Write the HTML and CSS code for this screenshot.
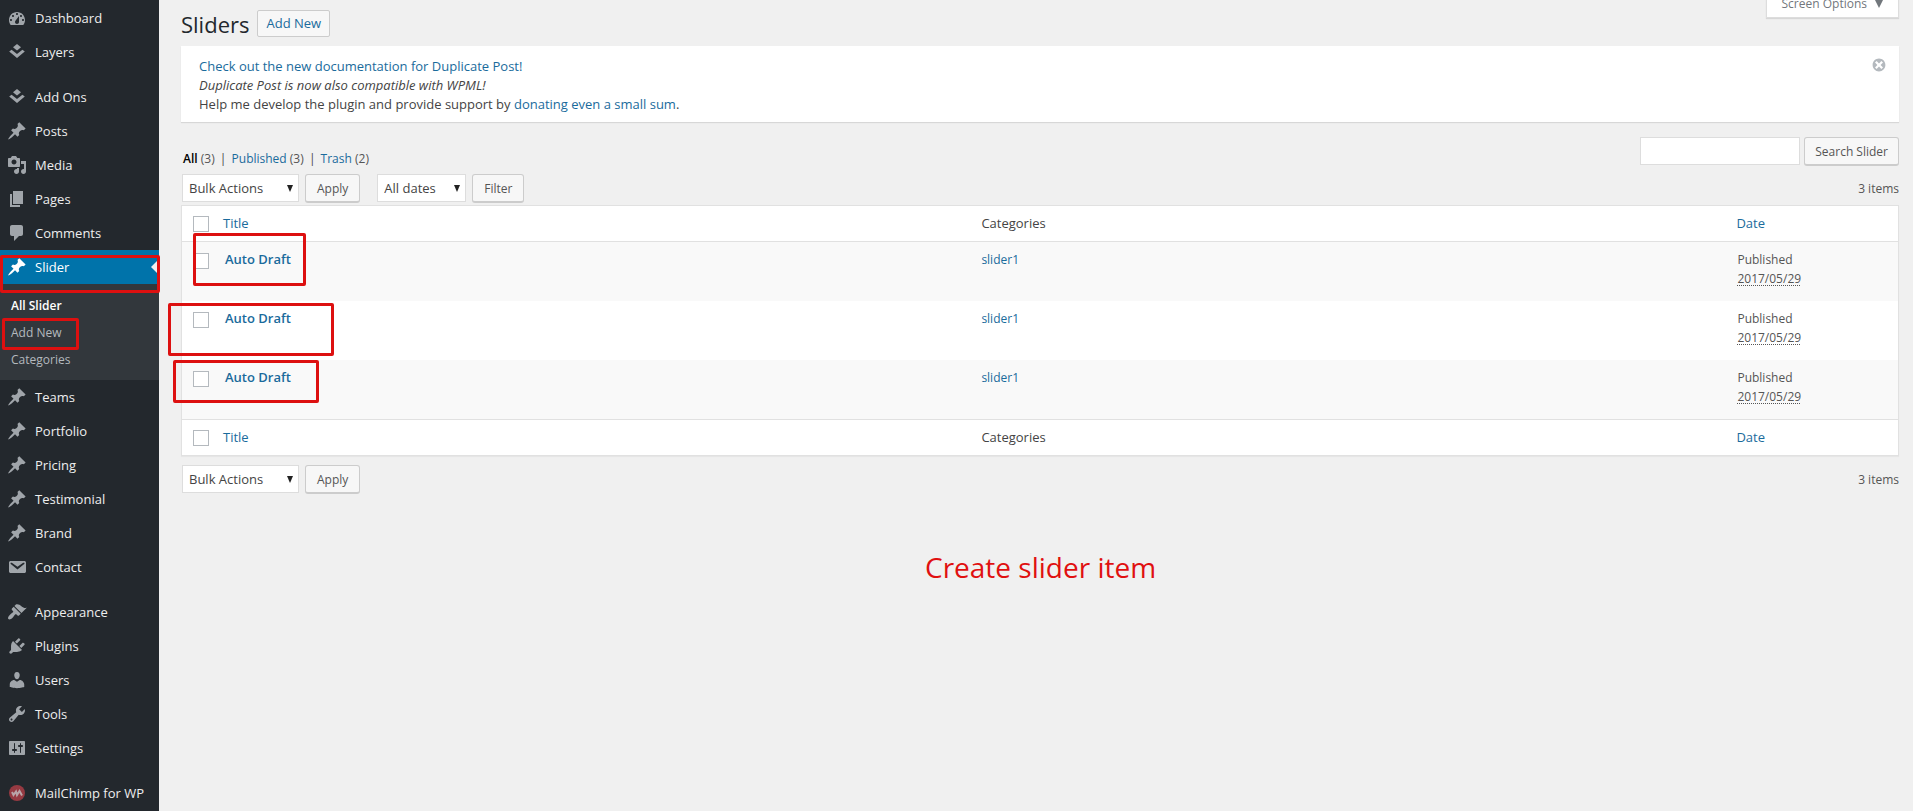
FILE: index.html
```html
<!DOCTYPE html>
<html lang="en">
<head>
<meta charset="utf-8">
<title>Sliders</title>
<link rel="stylesheet" href="styles.css">
</head>
<body>
<svg class="sprite" aria-hidden="true">
  <symbol id="i-dashboard" viewBox="0 0 20 20"><path fill-rule="evenodd" d="M3.760 17h12.480c1.100-1.370 1.760-3.110 1.760-5 0-4.420-3.580-8-8-8s-8 3.580-8 8c0 1.890.66 3.630 1.760 5zM10 5c.55 0 1 .45 1 1s-.45 1-1 1-1-.45-1-1 .45-1 1-1zM6 7c.55 0 1 .45 1 1s-.45 1-1 1-1-.45-1-1 .45-1 1-1zm8 0c.55 0 1 .45 1 1s-.45 1-1 1-1-.45-1-1 .45-1 1-1zm-5.370 5.550L12 8v6c0 1.100-.9 2-2 2s-2-.9-2-2c0-.57.24-1.080.63-1.450zM4 11c.55 0 1 .45 1 1s-.45 1-1 1-1-.45-1-1 .45-1 1-1zm12 0c.55 0 1 .45 1 1s-.45 1-1 1-1-.45-1-1 .45-1 1-1z"/></symbol>
  <symbol id="i-layers" viewBox="0 0 20 20"><path d="M10 2l4 3.200-4 3.200-4-3.200z"/><path d="M2.200 9.600L4.600 7.700 10 12l5.400-4.300 2.400 1.900L10 16z"/></symbol>
  <symbol id="i-pin" viewBox="0 0 20 20"><path d="M10.440 3.020l1.820-1.820 6.360 6.350-1.830 1.820c-1.050-.68-2.480-.57-3.410.36l-.75.75c-.92.93-1.040 2.350-.35 3.410l-1.830 1.820-2.410-2.410-2.800 2.790c-.42.42-3.380 2.710-3.800 2.290s1.860-3.390 2.280-3.810l2.790-2.790L4.100 9.360l1.830-1.820c1.050.69 2.480.57 3.400-.36l.75-.75c.93-.92 1.050-2.350.36-3.410z"/></symbol>
  <symbol id="i-media" viewBox="0 0 20 20"><path fill-rule="evenodd" d="M13 11V4c0-.55-.45-1-1-1h-1.670L9 1H5L3.670 3H2c-.55 0-1 .45-1 1v7c0 .55.45 1 1 1h10c.55 0 1-.45 1-1zM7 4.500c1.380 0 2.500 1.120 2.500 2.500S8.380 9.500 7 9.500 4.500 8.380 4.500 7 5.620 4.500 7 4.500zM14 6h5v10.500c0 1.380-1.120 2.500-2.500 2.500S14 17.880 14 16.500s1.120-2.500 2.500-2.500c.17 0 .34.02.5.05V9h-3V6zm-4 8.050V13h2v3.500c0 1.380-1.120 2.500-2.500 2.500S7 17.880 7 16.500 8.120 14 9.500 14c.17 0 .34.02.5.05z"/></symbol>
  <symbol id="i-page" viewBox="0 0 20 20"><path d="M6 15V2h10v13H6zm-1 1h8v2H3V5h2v11z"/></symbol>
  <symbol id="i-comment" viewBox="0 0 20 20"><path d="M5 2h9c1.100 0 2 .9 2 2v7c0 1.100-.9 2-2 2h-2l-5 5v-5H5c-1.100 0-2-.9-2-2V4c0-1.100.9-2 2-2z"/></symbol>
  <symbol id="i-mail" viewBox="0 0 20 20"><path fill-rule="evenodd" d="M3.870 4h13.250C18.370 4 19 4.590 19 5.790v8.420c0 1.190-.63 1.790-1.880 1.790H3.870c-1.250 0-1.880-.6-1.880-1.790V5.790c0-1.200.63-1.790 1.880-1.790zm6.620 8.600l6.740-5.530c.24-.2.43-.66.13-1.070-.29-.41-.82-.42-1.170-.17l-5.700 3.860L4.800 5.830c-.35-.25-.88-.24-1.170.17-.3.41-.11.87.13 1.070z"/></symbol>
  <symbol id="i-brush" viewBox="0 0 20 20"><path d="M14.480 11.060L7.410 3.990l1.500-1.500c.5-.56 2.300-.47 3.510.32 1.210.8 1.430 1.280 2.910 2.100 1.180.64 2.450 1.260 4.450.85zm-.71.71L6.700 4.700 4.930 6.470c-.39.39-.39 1.020 0 1.410l1.060 1.060c.39.39.39 1.030 0 1.420-.6.6-1.430 1.110-2.210 1.690-.35.26-.7.53-1.010.84C1.430 14.230.4 16.080 1.400 17.070c.99 1 2.840-.03 4.180-1.360.31-.31.58-.66.85-1.020.57-.78 1.080-1.610 1.690-2.210.39-.39 1.020-.39 1.410 0l1.060 1.060c.39.39 1.020.39 1.410 0z"/></symbol>
  <symbol id="i-plug" viewBox="0 0 20 20"><path d="M13.110 4.360L9.870 7.600 8 5.730l3.240-3.240c.35-.34 1.050-.2 1.560.32.52.51.66 1.210.31 1.550zm-8 1.770l.91-1.120 9.010 9.010-1.190.84c-.71.71-2.630 1.160-3.820 1.160H6.140L4.900 17.260c-.59.59-1.540.59-2.120 0-.59-.58-.59-1.530 0-2.120l1.240-1.240v-3.880c0-1.130.4-3.190 1.090-3.890zm7.260 3.970l3.240-3.240c.34-.35 1.040-.21 1.550.31.52.51.66 1.210.31 1.550l-3.240 3.250z"/></symbol>
  <symbol id="i-user" viewBox="0 0 20 20"><path d="M10 9.250c-2.270 0-2.730-3.440-2.730-3.440C7 4.020 7.820 2 9.970 2c2.160 0 2.980 2.020 2.710 3.810 0 0-.41 3.440-2.680 3.440zm0 2.570L12.720 10c2.390 0 4.520 2.330 4.520 4.530v2.490s-3.650 1.130-7.240 1.130c-3.650 0-7.240-1.130-7.240-1.130v-2.490c0-2.250 1.940-4.480 4.470-4.480z"/></symbol>
  <symbol id="i-wrench" viewBox="0 0 20 20"><path fill-rule="evenodd" d="M16.680 9.770c-1.340 1.340-3.300 1.670-4.950.99l-5.410 6.520c-.99.99-2.590.99-3.580 0s-.99-2.590 0-3.570l6.520-5.420c-.68-1.650-.35-3.610.99-4.950 1.280-1.280 3.120-1.620 4.720-1.060l-2.890 2.890 2.820 2.820 2.860-2.870c.53 1.580.18 3.390-1.080 4.650zM3.810 16.210c.4.39 1.040.39 1.430 0 .4-.4.4-1.040 0-1.430-.39-.4-1.030-.4-1.430 0-.39.39-.39 1.030 0 1.430z"/></symbol>
  <symbol id="i-sliders" viewBox="0 0 20 20"><path fill-rule="evenodd" d="M18 16V4c0-.55-.45-1-1-1H3c-.55 0-1 .45-1 1v12c0 .55.45 1 1 1h14c.55 0 1-.45 1-1zM8 11h1c.55 0 1 .45 1 1s-.45 1-1 1H8v1.500c0 .28-.22.5-.5.5s-.5-.22-.5-.5V13H6c-.55 0-1-.45-1-1s.45-1 1-1h1V5.500c0-.28.22-.5.5-.5s.5.22.5.5V11zm5-2h-1c-.55 0-1-.45-1-1s.45-1 1-1h1V5.500c0-.28.22-.5.5-.5s.5.22.5.5V7h1c.55 0 1 .45 1 1s-.45 1-1 1h-1v5.500c0 .28-.22.5-.5.5s-.5-.22-.5-.5V9z"/></symbol>
  <symbol id="i-chimp" viewBox="0 0 20 20"><circle cx="10" cy="10" r="8" fill="#963a42"/><path d="M5 9l1.500 3L9 8.500l1 3.500 2.500-4 2.500 4.500" fill="none" stroke="#b9a4a8" stroke-width="2"/></symbol>
  <symbol id="i-dismiss" viewBox="0 0 20 20"><path fill-rule="evenodd" d="M10 2c4.420 0 8 3.580 8 8s-3.580 8-8 8-8-3.580-8-8 3.580-8 8-8zm5 11l-3-3 3-3-2-2-3 3-3-3-2 2 3 3-3 3 2 2 3-3 3 3z"/></symbol>
</svg>

<div class="layout">
  <nav class="menu" aria-label="Main menu">
    <a class="menu-item" href="#"><svg class="icon"><use href="#i-dashboard"/></svg>Dashboard</a>
    <a class="menu-item" href="#"><svg class="icon"><use href="#i-layers"/></svg>Layers</a>
    <a class="menu-item spaced" href="#"><svg class="icon"><use href="#i-layers"/></svg>Add Ons</a>
    <a class="menu-item" href="#"><svg class="icon"><use href="#i-pin"/></svg>Posts</a>
    <a class="menu-item" href="#"><svg class="icon"><use href="#i-media"/></svg>Media</a>
    <a class="menu-item" href="#"><svg class="icon"><use href="#i-page"/></svg>Pages</a>
    <a class="menu-item" href="#"><svg class="icon"><use href="#i-comment"/></svg>Comments</a>
    <a class="menu-item current" href="#"><svg class="icon"><use href="#i-pin"/></svg>Slider</a>
    <div class="submenu">
      <a class="submenu-item active" href="#">All Slider</a>
      <a class="submenu-item" href="#">Add New</a>
      <a class="submenu-item" href="#">Categories</a>
    </div>
    <a class="menu-item" href="#"><svg class="icon"><use href="#i-pin"/></svg>Teams</a>
    <a class="menu-item" href="#"><svg class="icon"><use href="#i-pin"/></svg>Portfolio</a>
    <a class="menu-item" href="#"><svg class="icon"><use href="#i-pin"/></svg>Pricing</a>
    <a class="menu-item" href="#"><svg class="icon"><use href="#i-pin"/></svg>Testimonial</a>
    <a class="menu-item" href="#"><svg class="icon"><use href="#i-pin"/></svg>Brand</a>
    <a class="menu-item" href="#"><svg class="icon"><use href="#i-mail"/></svg>Contact</a>
    <a class="menu-item spaced" href="#"><svg class="icon"><use href="#i-brush"/></svg>Appearance</a>
    <a class="menu-item" href="#"><svg class="icon"><use href="#i-plug"/></svg>Plugins</a>
    <a class="menu-item" href="#"><svg class="icon"><use href="#i-user"/></svg>Users</a>
    <a class="menu-item" href="#"><svg class="icon"><use href="#i-wrench"/></svg>Tools</a>
    <a class="menu-item" href="#"><svg class="icon"><use href="#i-sliders"/></svg>Settings</a>
    <a class="menu-item spaced" href="#"><svg class="icon"><use href="#i-chimp"/></svg>MailChimp for WP</a>
  </nav>

  <main class="content">
    <header class="page-head">
      <h1 class="page-title">Sliders</h1>
      <a class="title-action" href="#">Add New</a>
      <button class="screen-options" type="button">Screen Options</button>
    </header>

    <section class="notice">
      <p class="notice-text">
        <a href="#">Check out the new documentation for Duplicate Post!</a><br>
        <em>Duplicate Post is now also compatible with WPML!</em><br>
        Help me develop the plugin and provide support by <a href="#">donating even a small sum</a>.
      </p>
      <button class="dismiss" type="button" aria-label="Dismiss"><svg class="dismiss-icon"><use href="#i-dismiss"/></svg></button>
    </section>

    <div class="views-row">
      <div class="views">
        <a class="view-current" href="#">All</a> <span class="count">(3)</span> <span class="bar">|</span>
        <a href="#">Published</a> <span class="count">(3)</span> <span class="bar">|</span>
        <a href="#">Trash</a> <span class="count">(2)</span>
      </div>
      <form class="search">
        <input class="search-input" type="search" aria-label="Search Slider">
        <button class="button" type="button">Search Slider</button>
      </form>
    </div>

    <div class="tablenav">
      <span class="select-wrap bulk"><select class="select" aria-label="Bulk action"><option>Bulk Actions</option></select></span>
      <button class="button" type="button">Apply</button>
      <span class="select-wrap dates"><select class="select" aria-label="Filter by date"><option>All dates</option></select></span>
      <button class="button" type="button">Filter</button>
      <span class="item-count">3 items</span>
    </div>

    <table class="list">
      <thead>
        <tr><td class="col-check"><input class="check" type="checkbox" aria-label="Select all"></td><th class="col-title"><a href="#">Title</a></th><th class="col-cats">Categories</th><th class="col-date"><a href="#">Date</a></th></tr>
      </thead>
      <tbody>
        <tr><td class="col-check"><input class="check" type="checkbox" aria-label="Select Auto Draft"></td><td><a class="row-title" href="#">Auto Draft</a></td><td class="cat"><a href="#">slider1</a></td><td class="date">Published<br><abbr>2017/05/29</abbr></td></tr>
        <tr><td class="col-check"><input class="check" type="checkbox" aria-label="Select Auto Draft"></td><td><a class="row-title" href="#">Auto Draft</a></td><td class="cat"><a href="#">slider1</a></td><td class="date">Published<br><abbr>2017/05/29</abbr></td></tr>
        <tr><td class="col-check"><input class="check" type="checkbox" aria-label="Select Auto Draft"></td><td><a class="row-title" href="#">Auto Draft</a></td><td class="cat"><a href="#">slider1</a></td><td class="date">Published<br><abbr>2017/05/29</abbr></td></tr>
      </tbody>
      <tfoot>
        <tr><td class="col-check"><input class="check" type="checkbox" aria-label="Select all"></td><th><a href="#">Title</a></th><th>Categories</th><th><a href="#">Date</a></th></tr>
      </tfoot>
    </table>

    <div class="tablenav bottom">
      <span class="select-wrap bulk"><select class="select" aria-label="Bulk action"><option>Bulk Actions</option></select></span>
      <button class="button" type="button">Apply</button>
      <span class="item-count">3 items</span>
    </div>

    <p class="caption">Create slider item</p>
  </main>
</div>

<div class="mark mark-menu"></div>
<div class="mark mark-add"></div>
<div class="mark mark-row1"></div>
<div class="mark mark-row2"></div>
<div class="mark mark-row3"></div>
</body>
</html>
```
FILE: styles.css
```css
* { box-sizing: border-box; }
body {
  margin: 0;
  background: #f0f0f0;
  color: #444;
  font: 13px/19px "Open Sans", "Noto Sans", sans-serif;
}
a { color: #1a6b9c; text-decoration: none; }
button, input, select { font: inherit; color: inherit; }
.sprite { position: absolute; width: 0; height: 0; }
.layout { display: flex; min-height: 100vh; }

/* Sidebar */
.menu { flex: none; width: 159px; padding-top: 1px; background: #23282d; }
.menu-item {
  position: relative;
  display: flex;
  align-items: center;
  gap: 8px;
  height: 34px;
  padding-left: 7px;
  color: #eee;
  font-size: 13px;
  font-weight: 500;
  white-space: nowrap;
}
.spaced { margin-top: 11px; }
.icon { flex: none; width: 20px; height: 20px; fill: #a0a5aa; }
.current { background: #0073aa; color: #fff; }
.current .icon { fill: #fff; }
.current::after {
  content: "";
  position: absolute;
  right: 0;
  border: 8px solid transparent;
  border-right-color: #f0f0f0;
}
.submenu { padding: 8px 0 7px; background: #32373c; }
.submenu-item { display: block; padding-left: 11px; color: #b4b9be; font-size: 12px; line-height: 27px; }
.active { color: #fff; font-weight: 600; }

/* Content */
.content { flex: 1; min-width: 0; padding: 0 14px 0 22px; }
.page-head { display: flex; align-items: flex-start; height: 46px; }
.page-title { margin: 8px 8px 0 0; color: #23282d; font-size: 22px; font-weight: 400; line-height: 32px; }
.title-action {
  margin-top: 10px;
  padding: 0 8px;
  border: 1px solid #ccc;
  border-radius: 2px;
  background: #f7f7f7;
  font-weight: 500;
  line-height: 25px;
}
.screen-options {
  display: flex;
  align-items: center;
  gap: 8px;
  height: 28px;
  margin: -10px 0 0 auto;
  padding: 0 15px;
  border: 1px solid #ddd;
  border-top: 0;
  background: #fff;
  box-shadow: 0 1px 1px rgba(0, 0, 0, .1);
  color: #72777c;
  font-size: 12px;
}
.screen-options::after { content: ""; border: 4px solid transparent; border-top: 8px solid #72777c; border-bottom: 0; }

.notice {
  display: flex;
  justify-content: space-between;
  align-items: flex-start;
  padding: 11px 12px 8px 18px;
  background: #fff;
  box-shadow: 0 1px 1px rgba(0, 0, 0, .1);
}
.notice-text { margin: 0; font-size: 13px; font-weight: 500; }
.notice-text em { font-weight: 400; }
.dismiss { display: flex; margin: 0; padding: 0; border: 0; background: none; }
.dismiss-icon { width: 16px; height: 16px; fill: #b4b9be; }

.views-row { display: flex; justify-content: space-between; align-items: flex-end; height: 46px; padding-top: 14px; }
.views { padding: 0 0 0 2px; font-size: 12px; }
.view-current { color: #000; font-weight: 600; }
.count, .item-count { color: #555; }
.bar { padding: 0 2px; }
.search { display: flex; gap: 4px; margin-bottom: 2px; }
.search-input { width: 160px; height: 28px; border: 1px solid #ddd; background: #fff; }
.button {
  height: 29px;
  padding: 0 10px;
  border: 1px solid #ccc;
  border-bottom-width: 2px;
  border-radius: 3px;
  background: #f7f7f7;
  color: #555;
  font-size: 12px;
}

.tablenav { display: flex; align-items: flex-start; gap: 6px; padding: 6px 0 2px 1px; }
.bottom { padding-top: 9px; }
.select-wrap { position: relative; }
.select-wrap::after {
  content: "";
  position: absolute;
  top: 11px;
  right: 6px;
  border: 3px solid transparent;
  border-top: 7px solid #222;
  border-bottom: 0;
}
.bulk { width: 117px; }
.dates { width: 89px; margin-left: 11px; }
.select {
  appearance: none;
  display: block;
  width: 100%;
  height: 28px;
  padding: 0 6px;
  border: 1px solid #ddd;
  border-radius: 0;
  background: #fff;
  font-size: 13px;
}
.item-count { margin-left: auto; font-size: 12px; line-height: 29px; }
.tablenav .button { padding: 0 11px; }

.list {
  width: 100%;
  border: 1px solid #e1e1e1;
  border-spacing: 0;
  background: #fff;
  box-shadow: 0 1px 1px rgba(0, 0, 0, .04);
  table-layout: fixed;
}
.list th { padding: 8px 10px; font-weight: 400; font-size: 13px; text-align: left; }
.list td { padding: 8px 12px 13px; vertical-align: top; }
.list thead td, .list tfoot td { padding-top: 10px; padding-bottom: 9px; }
.list thead th, .list thead td { border-bottom: 1px solid #e1e1e1; }
.list tfoot th, .list tfoot td { border-top: 1px solid #e1e1e1; }
.list tbody tr:nth-child(odd) { background: #f9f9f9; }
.list .col-check { width: 31px; padding-left: 11px; padding-right: 0; }
.list td.cat { padding-left: 10px; font-size: 12px; }
.list td.date { padding-left: 11px; color: #555; font-size: 12px; }
.col-cats { width: 44%; }
.col-date { width: 10%; }
.row-title { font-weight: 600; }
.check {
  appearance: none;
  display: block;
  width: 16px;
  height: 16px;
  margin: 0;
  border: 1px solid #b4b9be;
  background: #fff;
}
.list tbody .check { margin-top: 3px; }
abbr { text-decoration: underline dotted 1px; text-underline-offset: 2px; }
.caption { margin: 53px 0 0 744px; color: #e01010; font-size: 28px; line-height: 36px; }

/* Hand-drawn highlights over the page */
.mark { position: absolute; border: 3px solid #dd1010; border-radius: 2px; pointer-events: none; }
.mark-menu { left: 0; top: 255px; width: 160px; height: 38px; }
.mark-add { left: 2px; top: 318px; width: 77px; height: 32px; }
.mark-row1 { left: 193px; top: 233px; width: 113px; height: 53px; }
.mark-row2 { left: 168px; top: 303px; width: 166px; height: 53px; }
.mark-row3 { left: 173px; top: 360px; width: 146px; height: 43px; }
```
